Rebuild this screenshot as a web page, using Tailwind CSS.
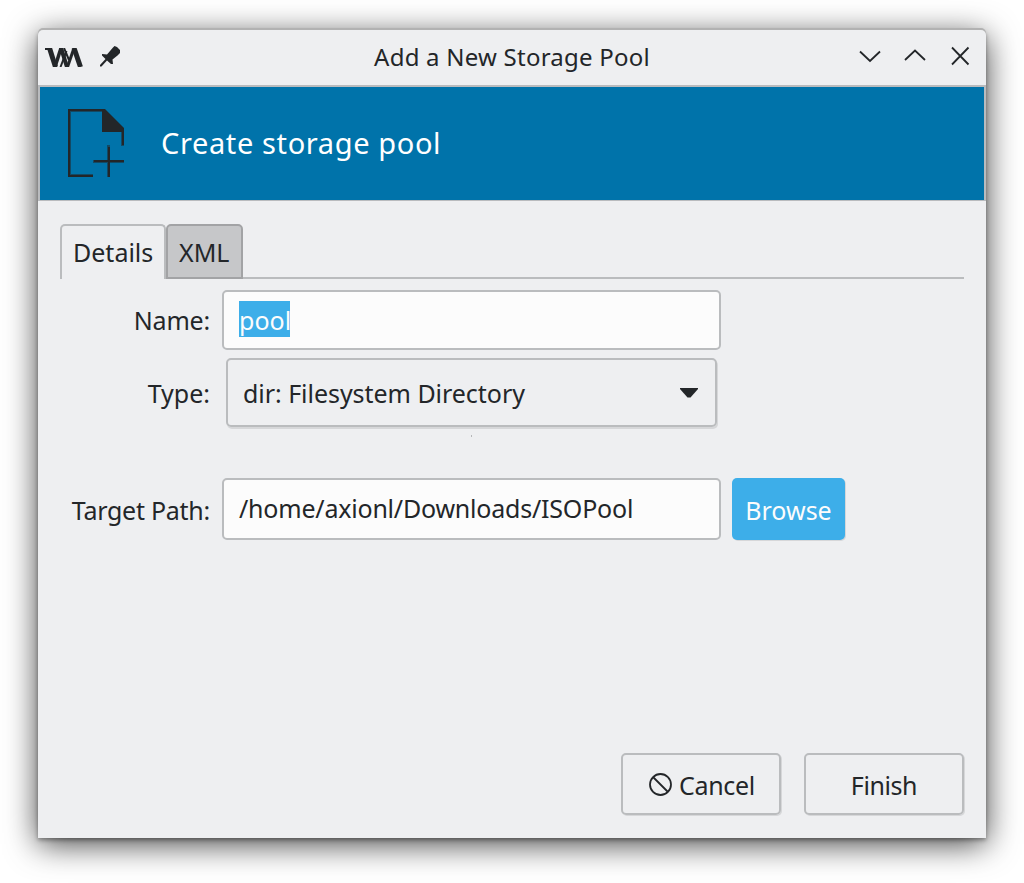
<!DOCTYPE html>
<html lang="en">
<head>
<meta charset="utf-8">
<title>Add a New Storage Pool</title>
<script src="https://cdn.jsdelivr.net/npm/@tailwindcss/browser@4"></script>
</head>
<body class="bg-white w-[1024px] h-[883px] overflow-hidden pl-[38px] pt-[30px] font-['Noto_Sans',sans-serif] text-[25px] leading-[34px] text-[#232629]">
<main class="w-[948px] h-[808px] flex flex-col bg-[#eeeff1] rounded-t-[5px] shadow-[0_-2px_0_0_#b2b2b2,0_2px_4px_0_rgba(0,0,0,0.35),0_6px_32px_0_rgba(0,0,0,0.75)]">
  <header class="h-[55px] shrink-0 flex items-center">
    <svg class="ml-[7px] mb-[1px] w-[38px] h-[19px]" viewBox="0 0 38 19" fill="none" stroke="#232629">
      <path d="M0 1H7" stroke-width="2"/>
      <path d="M4.500 0L10.500 19" stroke-width="5"/>
      <path d="M10 19L16 0" stroke-width="3.500"/>
      <path d="M16 0L22 19" stroke-width="4"/>
      <path d="M15.500 19L21.500 3" stroke-width="2"/>
      <path d="M19 0L24 12" stroke-width="2"/>
      <path d="M22.500 19L29 0" stroke-width="3"/>
      <path d="M29 0L35.500 19" stroke-width="5"/>
    </svg>
    <svg class="ml-[17px] mb-[3px] w-[20px] h-[21px]" viewBox="0 0 20 21" fill="#232629">
      <path d="M13 1.500L14.500 0L17 1L20 4V7L17.500 9.500L12.500 13.500L13 18H11L7 14.500L1.500 20.500H0V19L5.500 13L2 9.500V8L7 8.500Z"/>
    </svg>
    <div class="w-[540px] ml-[122px] pb-[2px] text-center text-[24px] tracking-[0.23px] whitespace-nowrap">Add a New Storage Pool</div>
    <div class="ml-auto mr-[15px] mb-[3px] flex items-center gap-[23px]">
      <svg class="w-[22px] h-[22px]" viewBox="0 0 22 22" fill="none" stroke="#232629" stroke-width="1.800"><path d="M1 6.500L11 16L21 6.500"/></svg>
      <svg class="w-[22px] h-[22px]" viewBox="0 0 22 22" fill="none" stroke="#232629" stroke-width="1.800"><path d="M1 15L11 5.500L21 15"/></svg>
      <svg class="w-[22px] h-[22px]" viewBox="0 0 22 22" fill="none" stroke="#232629" stroke-width="1.800"><path d="M3 2.500L19.500 19.500M19.500 2.500L3 19.500"/></svg>
    </div>
  </header>
  <section class="h-[116px] shrink-0 border-2 border-b border-[#b9bbbe] bg-[#0073aa] flex items-center text-white">
    <svg class="ml-[28px] mb-[1px] w-[56px] h-[68px]" viewBox="0 0 56 68" fill="none" stroke="#232629">
      <path d="M25 66.500H1.500V1.500H36" stroke-width="3" stroke-opacity=".55"/>
      <path d="M25 67H1V1H36" stroke-width="2"/>
      <path d="M34 0H37L56 19V23H34Z" fill="#232629" stroke="none"/>
      <path d="M54.500 22V37M40.500 36V68M25 52.500H56" stroke-width="3" stroke-opacity=".55"/>
      <path d="M55 22V36M41 38V68M26 52H56" stroke-width="2"/>
    </svg>
    <h1 class="ml-[37px] pb-[2px] text-[29px] leading-[40px] tracking-[0.62px] whitespace-nowrap">Create storage pool</h1>
  </section>
  <div class="mt-[23px] mx-[22px] h-[55px] shrink-0 flex">
    <div class="w-[106px] border-2 border-b-0 border-[#babcbe] rounded-t-[5px] pl-[11px] pt-[9px] whitespace-nowrap">Details</div>
    <div class="w-[77px] border-2 border-[#a2a3a5] bg-[#c6c7c9] rounded-t-[5px] pl-[11px] pt-[9px] whitespace-nowrap">XML</div>
    <div class="grow border-b-2 border-[#babcbe]"></div>
  </div>
  <form class="mt-[11px] shrink-0 flex flex-col">
    <div class="flex h-[60px] items-center">
      <label class="w-[172px] text-right tracking-[-0.2px]">Name:</label>
      <div class="ml-[12px] w-[499px] h-[60px] rounded-[5px] border-2 border-[#babcbe] bg-[#fcfcfc] pl-[15px] flex items-center"><span class="h-[36px] w-[51px] mb-[2px] bg-[#3daee9] text-[#fcfcfc] leading-[38px]">pool</span></div>
    </div>
    <div class="mt-[8px] flex h-[69px] items-center">
      <label class="w-[172px] text-right pt-px">Type:</label>
      <div class="ml-[16px] w-[491px] h-[69px] rounded-[5px] border-2 border-[#babcbe] shadow-[1px_2px_0_0_#d6d7d9] pl-[15px] pr-[17px] flex items-center justify-between"><span class="pt-px tracking-[-0.04px]">dir: Filesystem Directory</span>
        <svg class="w-[18px] h-[10px]" viewBox="0 0 18 10" fill="#232629"><path d="M0 0H18V1L10.500 9.500H7.500L0 1Z"/></svg>
      </div>
    </div>
    <div class="h-[51px] pl-[433px] pt-[8px]"><div class="w-px h-[2px] bg-[#b5b7b9]"></div></div>
    <div class="flex h-[62px] items-center">
      <label class="w-[172px] text-right pt-[2px] tracking-[-0.26px]">Target Path:</label>
      <div class="ml-[12px] w-[499px] h-[62px] rounded-[5px] border-2 border-[#babcbe] bg-[#fcfcfc] pl-[15px] pb-[2px] flex items-center tracking-[-0.21px]">/home/axionl/Downloads/ISOPool</div>
      <button type="button" class="ml-[11px] w-[113px] h-[62px] rounded-[5px] bg-[#3daee9] text-[#fcfcfc] shadow-[1px_1px_0_0_#d6d7d9] pt-[1px]">Browse</button>
    </div>
  </form>
  <footer class="mt-auto mb-[23px] mr-[22px] flex justify-end gap-[23px]">
    <button type="button" class="w-[160px] h-[62px] rounded-[5px] border-2 border-[#babcbe] shadow-[1px_1px_0_0_#d6d7d9] flex items-center justify-center gap-[7px] pl-[2px]">
      <svg class="w-[23px] h-[23px] mt-px" viewBox="0 0 23 23" fill="none" stroke="#232629" stroke-width="1.800"><circle cx="11.500" cy="11.500" r="10.500"/><path d="M4 4L19 19"/></svg>
      <span class="pt-[2px] tracking-[-0.3px]">Cancel</span></button>
    <button type="button" class="w-[160px] h-[62px] rounded-[5px] border-2 border-[#babcbe] shadow-[1px_1px_0_0_#d6d7d9] pt-[1px] tracking-[-0.4px]">Finish</button>
  </footer>
</main>
</body>
</html>
